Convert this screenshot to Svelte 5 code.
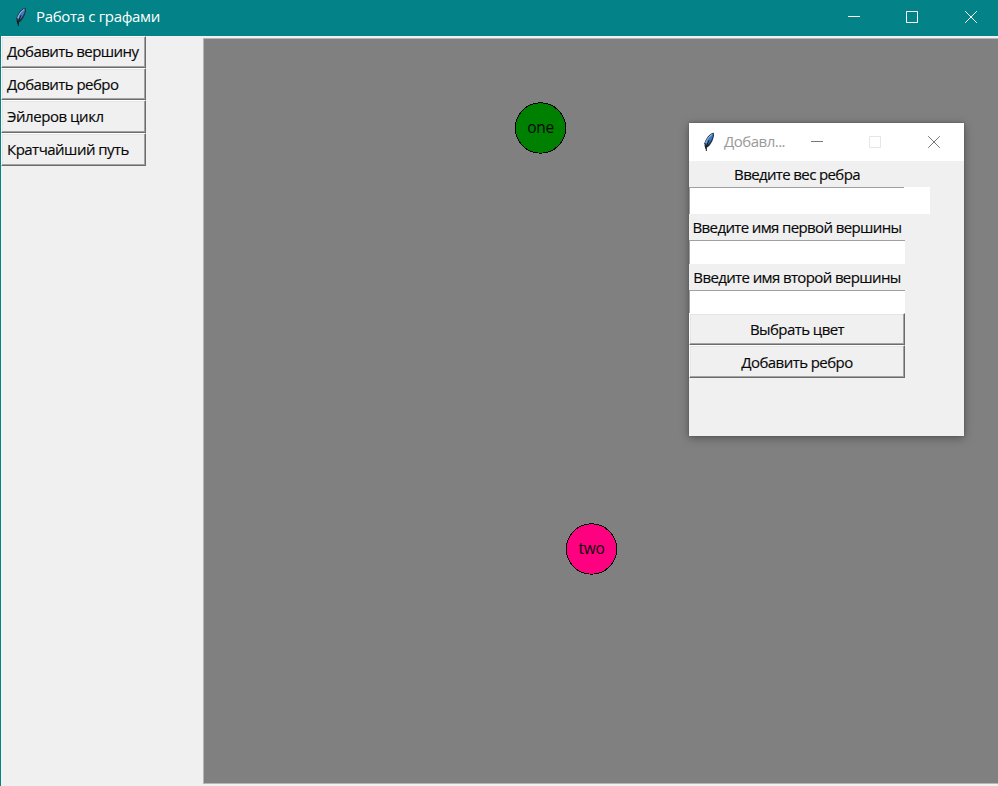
<script>
  const tools = [
    { text: 'Добавить вершину', spacing: -0.58, height: 32 },
    { text: 'Добавить ребро', spacing: -0.56, height: 32 },
    { text: 'Эйлеров цикл', spacing: -0.45, height: 33 },
    { text: 'Кратчайший путь', spacing: -0.52, height: 33 }
  ];
  const nodes = [
    { name: 'one', x: 540, y: 128, color: '#008000' },
    { name: 'two', x: 591, y: 549, color: '#ff0080' }
  ];
</script>

{#snippet feather()}
  <svg class="feather" width="12" height="20" viewBox="0 0 12 20" aria-hidden="true">
    <path d="M10.8 .7C6.8 1.1 3 6.1 1.3 11.3L2.1 15.2L4 15.6C7.8 13.3 10 8.6 11 3.5Z" fill="#26323c" />
    <path d="M10.2 1.6C7 3 3.7 7 2.3 12L4.2 13C7.6 10.6 9.8 6.4 10.2 1.6Z" fill="#397bc9" />
    <path d="M9.2 2.4C6.2 4.3 3.8 7.5 2.7 11" fill="none" stroke="#b3cde7" stroke-width="1" />
    <path d="M6 8.2L4.8 11L3.3 14.7V19" fill="none" stroke="#101820" stroke-width="1" />
    <path d="M2 13.5L3 17" stroke="#171b20" />
  </svg>
{/snippet}

<main>
  <header class="titlebar">
    {@render feather()}
    <h1>Работа с графами</h1>
    <div class="controls">
      <svg width="14" height="14"><path d="M2 6.5H14" /></svg>
      <svg width="14" height="14"><path d="M1.5 1.5H12.5V12.5H1.5Z" /></svg>
      <svg width="14" height="14"><path d="M1.2 1.2L12.8 12.8M12.8 1.2L1.2 12.8" /></svg>
    </div>
  </header>
  <div class="workspace">
    <aside>
      {#each tools as tool}
        <button style:height="{tool.height}px"><span style:letter-spacing="{tool.spacing}px">{tool.text}</span></button>
      {/each}
    </aside>
    <div class="canvas"></div>
  </div>

  {#each nodes as node}
    <div class="node" style:left="{node.x - 26}px" style:top="{node.y - 26}px">
      <svg width="53" height="53" shape-rendering="crispEdges"><circle cx="26.5" cy="26" r="25.2" fill={node.color} stroke="#000" /></svg>
      <span>{node.name}</span>
    </div>
  {/each}

  <section class="dialog">
    <header>
      {@render feather()}
      <h2>Добавл...</h2>
      <div class="controls">
        <svg width="14" height="14"><path d="M2 6.5H14" /></svg>
        <svg class="disabled" width="14" height="14"><path d="M1.5 1.5H12.5V12.5H1.5Z" /></svg>
        <svg width="14" height="14"><path d="M1.2 1.2L12.8 12.8M12.8 1.2L1.2 12.8" /></svg>
      </div>
    </header>
    <div class="form">
      <label class="weight" for="weight"><span>Введите вес ребра</span></label>
      <div class="wide"><input id="weight" /></div>
      <label class="first" for="first"><span>Введите имя первой вершины</span></label>
      <input id="first" />
      <label class="second" for="second"><span>Введите имя второй вершины</span></label>
      <input id="second" />
      <button><span>Выбрать цвет</span></button>
      <button class="add"><span>Добавить ребро</span></button>
    </div>
  </section>
</main>

<style>
  :global(body) { margin: 0; overflow: hidden; }
  * { box-sizing: border-box; }
  main {
    position: relative;
    width: 998px;
    height: 786px;
    display: flex;
    flex-direction: column;
    overflow: hidden;
    background: #f0f0f0;
    border-left: 1px solid #038387;
    color: #080808;
    font: 15px "Open Sans", "Noto Sans", sans-serif;
  }
  h1, h2 { margin: 0; font-size: 15px; font-weight: 400; white-space: nowrap; }
  span { white-space: nowrap; }
  button span, label span { -webkit-text-stroke: .15px #080808; }
  .titlebar {
    height: 36px;
    flex: none;
    display: flex;
    align-items: center;
    padding: 0 20px 3px 14px;
    background: #038387;
    color: white;
  }
  .feather { flex: none; display: block; }
  h1 { margin: -1px 0 0 9px; letter-spacing: -.33px; }
  .controls { display: flex; margin-left: auto; gap: 45px; }
  .controls svg { display: block; fill: none; stroke: currentColor; stroke-width: 1; }
  .workspace { flex: 1; display: flex; min-height: 0; }
  aside { width: 202px; display: flex; flex-direction: column; align-items: flex-start; }
  button {
    display: flex;
    align-items: center;
    border: 1px solid;
    border-color: #fff #6c6c6c #6c6c6c #fff;
    box-shadow: inset -1px -1px #a3a3a3, inset 1px 1px #e5e5e5;
    background: #f0f0f0;
    border-radius: 0;
    color: #080808;
    padding: 0 0 1px 5px;
    font: inherit;
  }
  aside button { width: 145px; }
  aside button:first-child { padding-bottom: 2px; }
  .canvas {
    flex: 1;
    margin: 2px 0;
    border: 1px solid #b5b5b5;
    border-right: 0;
    background: #808080;
  }
  .node { position: absolute; width: 53px; height: 53px; display: grid; margin-left: -1px; }
  .node svg, .node span { grid-area: 1 / 1; }
  .node span { place-self: center; padding-bottom: 3px; font-size: 15.5px; letter-spacing: -.35px; }
  .dialog {
    position: absolute;
    left: 688px;
    top: 123px;
    width: 275px;
    height: 313px;
    background: #f0f0f0;
    box-shadow: 0 0 2px #555, 0 2px 9px rgb(0 0 0 / 35%);
  }
  .dialog header {
    height: 38px;
    display: flex;
    align-items: center;
    padding: 0 23px 1px 14px;
    background: white;
    color: #999;
  }
  .dialog header .controls { color: #777; }
  .dialog h2 { margin: -1px 0 0 9px; letter-spacing: -.5px; }
  .dialog header .disabled { color: #e6e6e6; }
  .form { width: 216px; display: flex; flex-direction: column; }
  label { display: flex; align-items: center; justify-content: center; letter-spacing: -.62px; padding-bottom: 1px; }
  .weight { height: 26px; }
  .first { height: 26px; }
  .second { height: 26px; }
  input {
    width: 216px;
    height: 24px;
    margin: 0;
    padding: 0;
    border: 0;
    border-top: 1px solid #a0a0a0;
    border-left: 1px solid #a0a0a0;
    border-radius: 0;
    background: white;
    outline: 0;
    font: inherit;
  }
  .wide { width: 241px; height: 27px; background: white; }
  .wide input { display: block; width: 215px; height: 27px; }
  #second { height: 23px; }
  .form button { width: 216px; height: 32px; justify-content: center; padding-left: 0; letter-spacing: -.56px; }
  .form .add { height: 33px; padding-bottom: 0; }
</style>
